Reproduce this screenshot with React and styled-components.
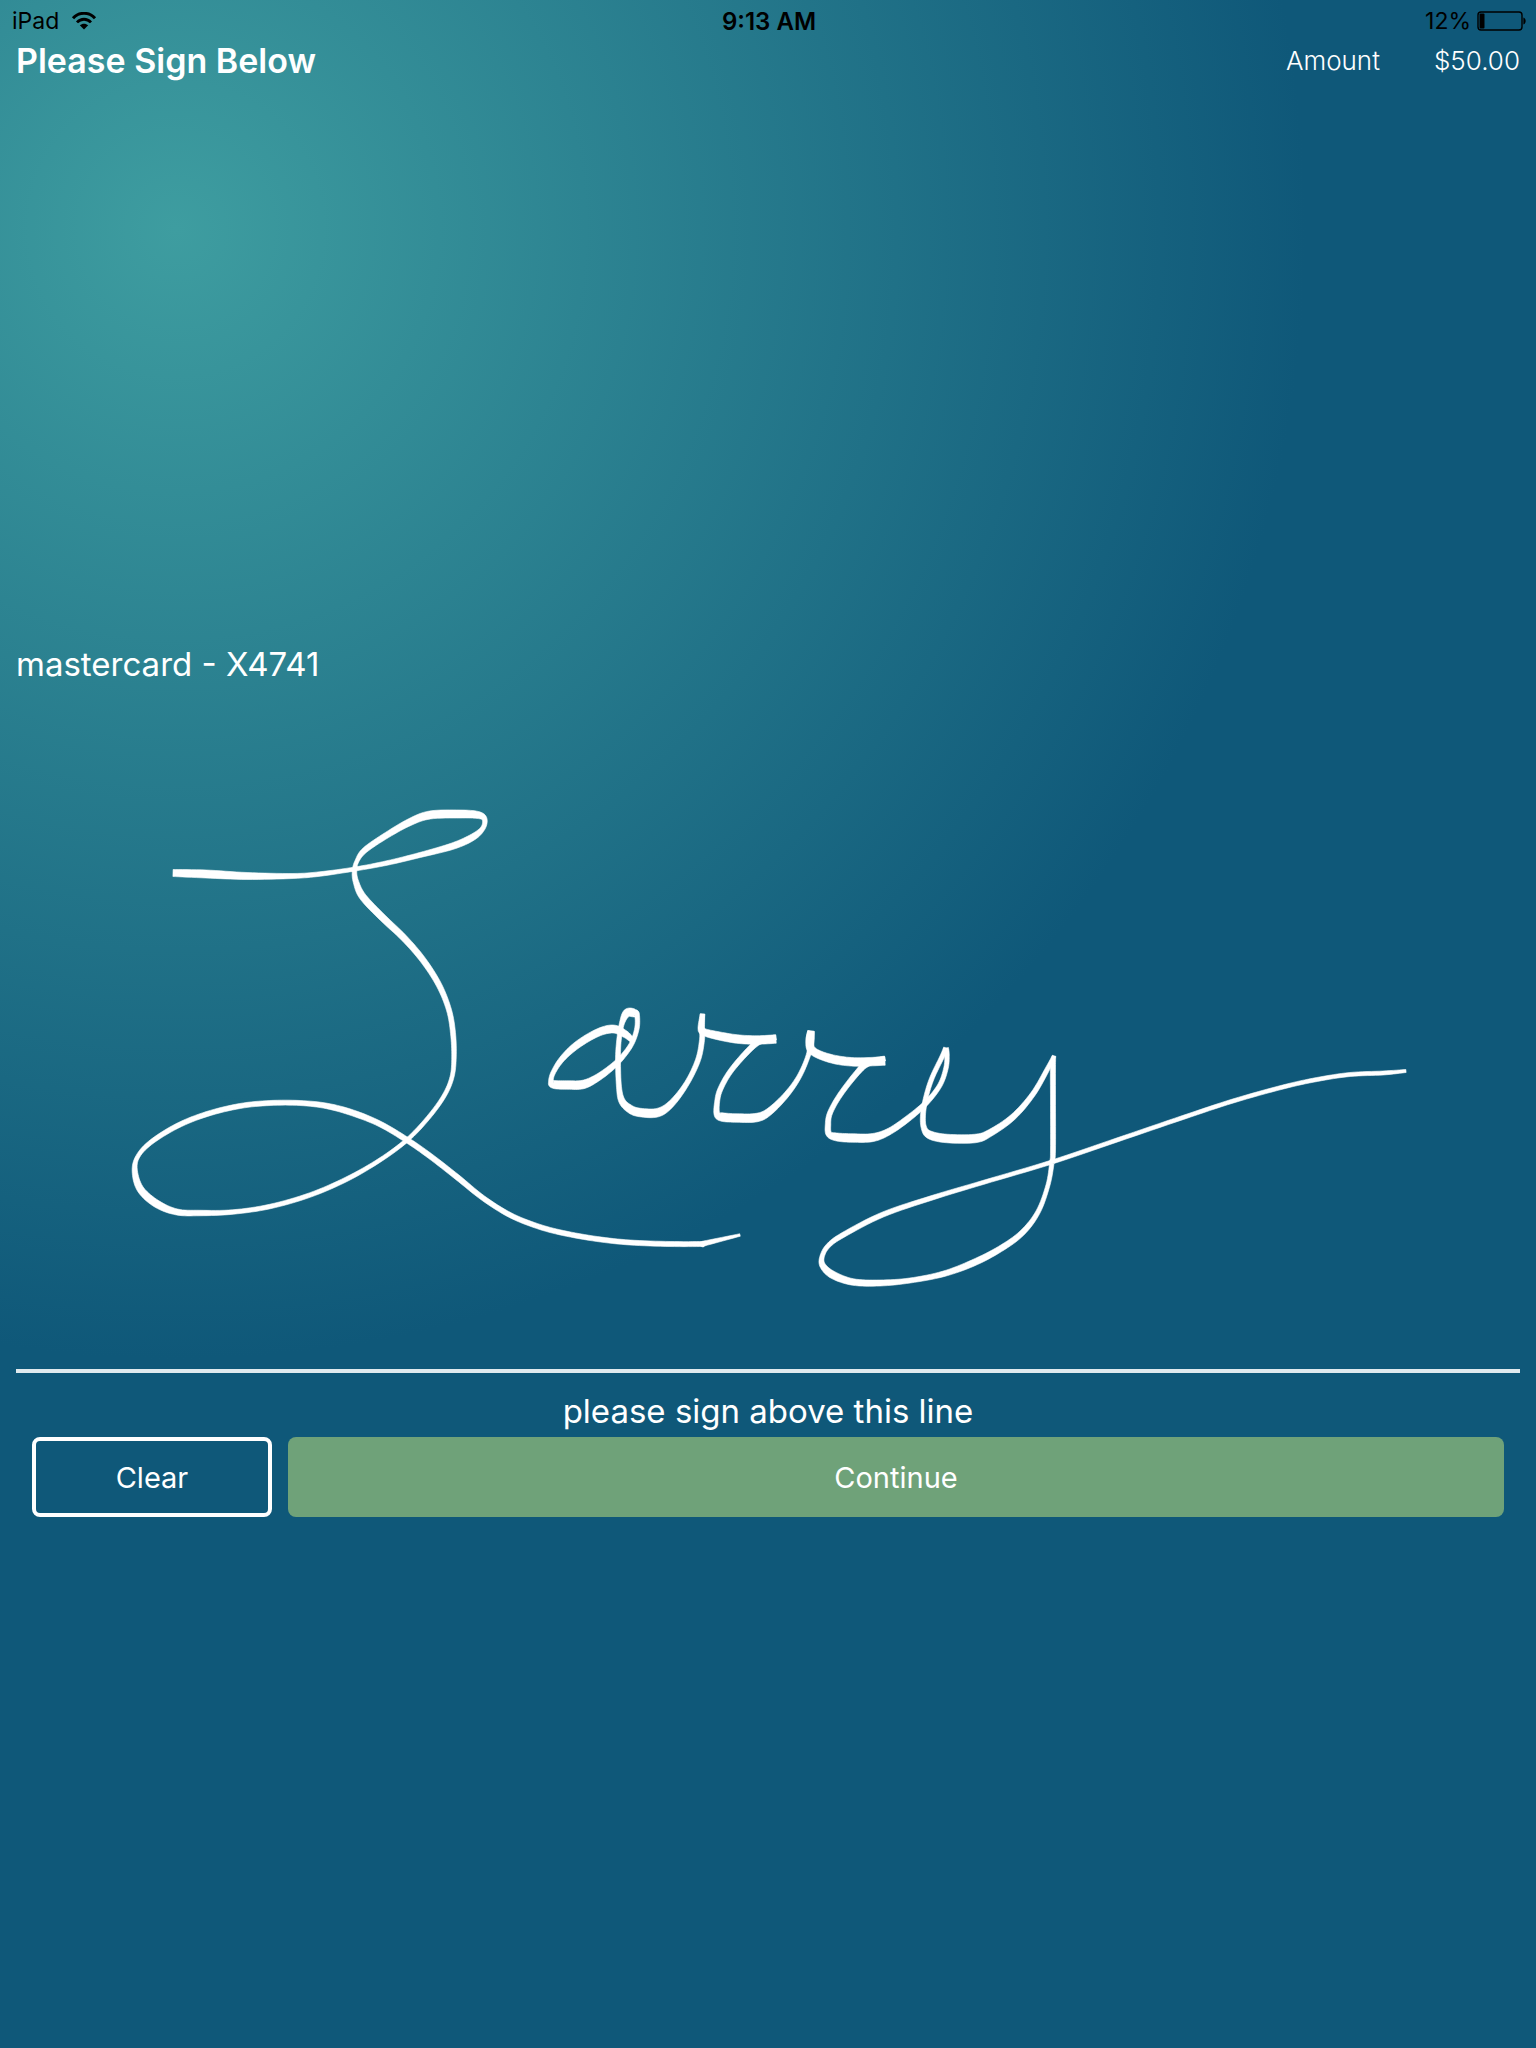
import React, { useState } from "react";
import styled, { createGlobalStyle } from "styled-components";


const GlobalStyle = createGlobalStyle`
    * {
        box-sizing: border-box;
    }
    body {
        margin: 0;
        background-color: #0f5879;
        font-family: Inter, "Liberation Sans", sans-serif;
    }
`

const Page = styled.div`
    min-height: 100vh;
    color: white;
    background-color: #0f5879;
    background-image: radial-gradient(circle 1130px at 176px 229px, #3e9da0, #0f5879);
`

const StatusBar = styled.div`
    display: grid;
    grid-template-columns: 1fr auto 1fr;
    align-items: center;
    height: 40px;
    padding: 2px 10px 0 12px;
    color: black;
    font-size: 23px;
`
const StatusSide = styled.div`
    display: flex;
    align-items: center;
    justify-content: ${(props) => (props.$right ? "flex-end" : "flex-start")};
    gap: ${(props) => (props.$right ? "6px" : "12px")};
`
const Time = styled.span`
    font-size: 24px;
    font-weight: 600;
`

const Header = styled.header`
    display: flex;
    justify-content: space-between;
    align-items: center;
    height: 40px;
    padding: 0 16px;
`
const Title = styled.h1`
    margin: 0;
    font-size: 34px;
    font-weight: 600;
`
const Total = styled.div`
    display: flex;
    gap: 54px;
    font-size: 26px;
    font-weight: 300;
`

const CardRow = styled.div`
    margin-top: 560px;
    padding: 0 16px;
    font-size: 33px;
    line-height: 48px;
`

const Pad = styled.svg`
    display: block;
    width: 100%;
    height: auto;
    fill: white;
`
const Line = styled.hr`
    height: 4px;
    margin: 0 16px;
    border: none;
    background-color: #e0eaee;
`
const Hint = styled.p`
    margin: 0;
    padding: 14px 0 2px;
    text-align: center;
    font-size: 33px;
    line-height: 48px;
`

const BtnBox = styled.div`
    display: grid;
    grid-template-columns: 240px 1fr;
    gap: 16px;
    padding: 0 32px;
`
const Btn = styled.button`
    height: 80px;
    border: ${(props) => (props.$outline ? "4px solid white" : "none")};
    border-radius: 8px;
    background-color: ${(props) => (props.$outline ? "transparent" : "#6fa279")};
    color: white;
    font-family: inherit;
    font-size: 29px;
    cursor: pointer;
`

// every pen point is [x, y, pen width]
const strokes = [
    [
        [173, 873, 7], [206, 874, 8], [247, 876, 7], [293, 876, 5], [320, 874, 4.5], [355, 869, 4],
        [387, 863, 4.5], [420, 855, 5], [453, 846, 6.5], [473, 837, 6.5], [483, 828, 4.5], [484.5, 819, 5],
        [478, 815, 7], [460, 814, 8], [430, 815, 8], [410, 822, 7], [387, 835, 6], [365, 850, 5.5],
        [357, 861, 4], [354.5, 871, 4.5], [356, 882, 5.5], [363, 897, 7], [383, 918, 7], [404, 938, 6.5],
        [423, 960, 6], [439, 985, 5.5], [449, 1010, 5], [453, 1033, 5], [454, 1057, 4.5], [452, 1077, 4],
        [444, 1096, 4], [428, 1118, 4], [407, 1140, 4], [380, 1160, 4], [347, 1179, 4.5], [310, 1195, 4.5],
        [270, 1206.5, 4.5], [233, 1212, 4.5], [200, 1213, 5.5], [177, 1212, 6], [157, 1204, 7.5], [141, 1190, 7],
        [135, 1173, 5.5], [137, 1158, 4], [150, 1143, 4.5], [177, 1126, 5], [207, 1114, 5], [240, 1106, 5],
        [270, 1103, 5], [300, 1103, 5], [327, 1106, 5.5], [353, 1113, 6], [380, 1124, 5.5], [407, 1140, 5.5],
        [430, 1156, 5.5], [457, 1177, 5.5], [483, 1198, 5], [510, 1215, 5], [537, 1226, 5], [563, 1233, 5],
        [597, 1239, 5], [630, 1242.5, 5], [670, 1244, 5], [702, 1244, 5], [704, 1243.5, 5], [740, 1235, 2.5],
    ],
    [
        [632, 1040, 5], [625, 1034, 7], [613, 1029, 8], [597, 1033, 7.5], [577, 1045, 7], [562, 1059, 5.5],
        [553, 1073, 4.5], [551, 1082, 5], [554, 1084.5, 8], [568, 1085, 8.5], [583, 1084.5, 8.5], [597, 1078, 7],
        [612, 1067, 6], [623, 1056, 5], [632, 1043, 4.5], [637, 1028, 4.5], [637, 1015, 5], [634, 1013, 8],
        [627, 1013, 8], [622, 1023, 5], [619, 1040, 4.5], [618, 1060, 5], [619, 1087, 5], [622, 1101, 6.5],
        [630, 1109, 8], [640, 1112.5, 8.5], [658, 1112.5, 8.5], [672, 1103, 6.5], [687, 1083, 5], [698, 1060, 5],
        [702, 1040, 5], [702, 1028, 5], [702.5, 1014, 4.5],
    ],
    [
        [702.5, 1014, 4.5], [701, 1028, 6], [704, 1032, 7], [717, 1035.5, 8], [737, 1039, 8.5], [757, 1040, 8.5],
        [776, 1039, 8.5],
    ],
    [
        [776, 1037.5, 5], [760, 1041, 6], [747, 1052, 5.5], [730, 1072, 5], [720, 1090, 5], [717, 1103, 5],
        [717, 1114, 6], [722, 1117, 8.5], [737, 1118, 8.5], [757, 1117.5, 8.5], [770, 1111, 7], [787, 1094, 5.5],
        [800, 1075, 4.5], [809, 1053, 4.5], [810, 1040, 8], [811, 1031, 6.5],
    ],
    [
        [811, 1031, 6.5], [810, 1040, 8], [811, 1049, 8], [820, 1055, 8], [837, 1060, 8.5], [857, 1062, 8.5],
        [885, 1061, 8.5],
    ],
    [
        [885, 1058.5, 5], [868, 1063, 6.5], [857, 1073, 5.5], [840, 1095, 5], [830, 1113, 5], [828, 1125, 5.5],
        [829, 1134, 6], [837, 1137, 8], [853, 1138, 8.5], [873, 1137.5, 8], [890, 1131, 6.5], [910, 1117, 6],
        [927, 1102, 5], [940, 1085, 4.5], [946, 1068, 4.5], [947, 1055, 4.5], [946, 1048, 5],
    ],
    [
        [946, 1048, 5], [942, 1057, 4.5], [932, 1078, 4.5], [926, 1097, 4.5], [923, 1115, 5], [924, 1128, 5.5],
        [930, 1135, 8], [947, 1138.5, 8.5], [975, 1138.5, 8.5], [990, 1133, 7], [1013, 1117, 6], [1033, 1094, 5],
        [1048, 1068, 4.5], [1054, 1056, 3.5],
    ],
    [
        [1054, 1056, 3.5], [1053, 1067, 5], [1053, 1100, 5], [1053, 1150, 5], [1052, 1162, 4.5], [1048, 1185, 4],
        [1038, 1212, 4.5], [1022, 1233, 5.5], [1000, 1249, 6], [973, 1263, 6.5], [943, 1274, 5.5], [910, 1280.5, 5],
        [880, 1283, 6], [853, 1282, 6.5], [833, 1275, 7.5], [823, 1266, 6], [822, 1257, 4.5], [828, 1246, 4.5],
        [843, 1235, 5], [883, 1214.5, 5], [933, 1197.5, 4.5], [983, 1182.5, 4], [1052, 1162, 4], [1117, 1140, 4],
        [1183, 1117.5, 4], [1233, 1101, 4], [1283, 1087, 4], [1317, 1079.5, 4], [1350, 1074.5, 4], [1383, 1073, 4],
        [1406, 1071, 3],
    ],
]

const steps = 8

const spline = (a, b, c, d, t) =>
    0.5 * (2 * b + (c - a) * t + (2 * a - 5 * b + 4 * c - d) * t * t + (3 * b - a - 3 * c + d) * t * t * t)

// fills in smooth points between the recorded ones
const smooth = (points) => {
    const result = []
    for (let i = 0; i < points.length - 1; i++) {
        const p0 = points[i - 1] || points[i]
        const p1 = points[i]
        const p2 = points[i + 1]
        const p3 = points[i + 2] || p2
        for (let s = 0; s < steps; s++) {
            result.push([0, 1, 2].map((k) => spline(p0[k], p1[k], p2[k], p3[k], s / steps)))
        }
    }
    result.push(points[points.length - 1])
    return result
}

// both edges of the pen, out along one side and back along the other
const outline = (points) => {
    const list = smooth(points)
    const left = []
    const right = []
    list.forEach(([x, y, w], i) => {
        const from = list[i - 1] || list[i]
        const to = list[i + 1] || list[i]
        const angle = Math.atan2(to[1] - from[1], to[0] - from[0])
        const dx = (Math.sin(angle) * w) / 2
        const dy = (Math.cos(angle) * w) / 2
        left.push(`${(x + dx).toFixed(2)},${(y - dy).toFixed(2)}`)
        right.unshift(`${(x - dx).toFixed(2)},${(y + dy).toFixed(2)}`)
    })
    return [...left, ...right].join(" ")
}

const Stroke = ({ points }) => (
    <polygon points={outline(points)} stroke="white" strokeWidth="0.6" strokeLinejoin="round" />
)

const Wifi = () => (
    <svg width="26" height="18" viewBox="0 0 26 18" fill="none" stroke="black" aria-label="Wi-Fi">
        <path d="M2 6.2C8-.3 18-.3 24 6.2" strokeWidth="3" />
        <path d="M6 10.4C10 6.2 16 6.2 20 10.4" strokeWidth="2.8" />
        <path d="M13 17.6L8.8 13.3C11.2 11.2 14.8 11.2 17.2 13.3Z" fill="black" stroke="none" />
    </svg>
)

const Battery = () => (
    <svg width="49" height="20" viewBox="0 0 49 20" fill="none" aria-label="Battery">
        <rect x="1" y="1" width="44" height="18" rx="3" stroke="black" strokeWidth="1.4" />
        <rect x="2.5" y="2.5" width="5" height="15" rx="1" fill="black" />
        <path d="M46.4 6.5C49.4 7.5 49.4 12.5 46.4 13.5Z" fill="black" />
    </svg>
)

const App = () => {
    const [signature, setSignature] = useState(strokes)
    return (
        <>
            <GlobalStyle />
            <Page>
                <StatusBar>
                    <StatusSide>
                        <span>iPad</span>
                        <Wifi />
                    </StatusSide>
                    <Time>9:13 AM</Time>
                    <StatusSide $right>
                        <span>12%</span>
                        <Battery />
                    </StatusSide>
                </StatusBar>
                <Header>
                    <Title>Please Sign Below</Title>
                    <Total>
                        <span>Amount</span>
                        <span>$50.00</span>
                    </Total>
                </Header>
                <CardRow>mastercard - X4741</CardRow>
                <Pad viewBox="0 688 1536 681" role="img" aria-label="Signature">
                    {signature.map((points, n) => (
                        <Stroke points={points} key={n} />
                    ))}
                </Pad>
                <Line />
                <Hint>please sign above this line</Hint>
                <BtnBox>
                    <Btn $outline onClick={() => { setSignature([]) }}>Clear</Btn>
                    <Btn>Continue</Btn>
                </BtnBox>
            </Page>
        </>
    )
}

export default App;
